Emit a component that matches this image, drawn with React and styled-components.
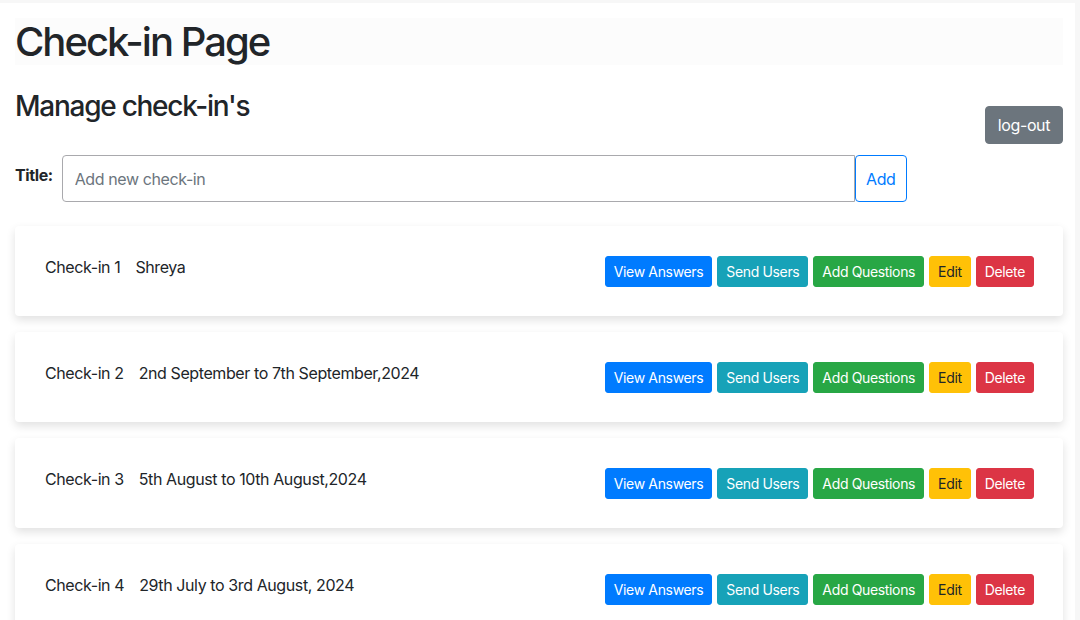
import React from 'react';
import styled, { createGlobalStyle } from 'styled-components';

const GlobalStyle = createGlobalStyle`
  html, body {
    margin: 0;
    padding: 0;
    background: #f7f7f7;
    font-family: Inter, "Noto Sans", "Liberation Sans", sans-serif;
    color: #212529;
    letter-spacing: -0.025em;
  }
  * { box-sizing: border-box; }
`;

const Page = styled.div`
  margin-top: 3px;
  margin-right: 5px;
  min-height: 617px;
  background: #fff;
  padding: 15px 12px 0 15px;
  overflow: hidden;
`;

const Banner = styled.div`
  background: #fcfcfc;
  height: 47px;
  display: flex;
  align-items: center;
`;

const PageTitle = styled.h1`
  margin: 0;
  font-size: 40px;
  font-weight: 500;
  line-height: 1.2;
  letter-spacing: -0.05em;
`;

const TopRow = styled.div`
  display: flex;
  justify-content: space-between;
  align-items: flex-start;
  margin-top: 25px;
`;

const SubTitle = styled.h3`
  margin: 0;
  font-size: 28px;
  font-weight: 500;
  line-height: 1.2;
  letter-spacing: -0.045em;
`;

const LogoutButton = styled.button`
  margin-top: 16px;
  background: #6c757d;
  color: #fff;
  border: 1px solid #6c757d;
  border-radius: 4px;
  font-family: inherit;
  font-size: 16px;
  letter-spacing: inherit;
  line-height: 24px;
  padding: 6px 12px;
`;

const FormRow = styled.div`
  display: flex;
  align-items: flex-start;
  margin-top: 11px;
`;

const Label = styled.label`
  font-weight: 700;
  font-size: 16px;
  line-height: 24px;
  margin-top: 8px;
  margin-right: 9px;
`;

const TitleInput = styled.input`
  width: 793px;
  height: 47px;
  border: 1px solid #a9a9ad;
  border-radius: 4px 0 0 4px;
  padding: 0 12px;
  font-family: inherit;
  font-size: 16px;
  letter-spacing: inherit;
  color: #495057;
  outline: none;
  &::placeholder { color: #6c757d; }
`;

const AddButton = styled.button`
  width: 52px;
  height: 47px;
  background: #fff;
  color: #007bff;
  border: 1px solid #007bff;
  border-radius: 4px;
  font-family: inherit;
  font-size: 16px;
  letter-spacing: inherit;
`;

const List = styled.div`
  display: flex;
  flex-direction: column;
  gap: 16px;
  margin-top: 24px;
`;

const Card = styled.div`
  height: 90px;
  background: #fff;
  border-radius: 4px;
  box-shadow: 0 4px 10px rgba(0, 0, 0, 0.12);
  display: flex;
  align-items: center;
  justify-content: space-between;
  padding: 0 29px 0 30px;
`;

const CardText = styled.div`
  font-size: 16px;
  line-height: 24px;
  margin-bottom: 8px;
  display: flex;
  gap: 15px;
`;

const Actions = styled.div`
  display: flex;
  gap: 5px;
`;

const colors = {
  primary: ['#007bff', '#fff'],
  info: ['#17a2b8', '#fff'],
  success: ['#28a745', '#fff'],
  warning: ['#ffc107', '#212529'],
  danger: ['#dc3545', '#fff'],
};

const SmallButton = styled.button`
  background: ${(p) => colors[p.$variant][0]};
  border: 1px solid ${(p) => colors[p.$variant][0]};
  color: ${(p) => colors[p.$variant][1]};
  border-radius: 3px;
  font-family: inherit;
  font-size: 14px;
  letter-spacing: -0.025em;
  line-height: 21px;
  padding: 4px 8px;
`;

const checkins = [
  { name: 'Check-in 1', detail: 'Shreya' },
  { name: 'Check-in 2', detail: '2nd September to 7th September,2024' },
  { name: 'Check-in 3', detail: '5th August to 10th August,2024' },
  { name: 'Check-in 4', detail: '29th July to 3rd August, 2024' },
];

const App = () => (
  <>
    <GlobalStyle />
    <Page>
      <Banner>
        <PageTitle>Check-in Page</PageTitle>
      </Banner>
      <TopRow>
        <SubTitle>Manage check-in's</SubTitle>
        <LogoutButton>log-out</LogoutButton>
      </TopRow>
      <FormRow>
        <Label>Title:</Label>
        <TitleInput placeholder="Add new check-in" />
        <AddButton>Add</AddButton>
      </FormRow>
      <List>
        {checkins.map((c) => (
          <Card key={c.name}>
            <CardText>
              <span>{c.name}</span>
              <span>{c.detail}</span>
            </CardText>
            <Actions>
              <SmallButton $variant="primary">View Answers</SmallButton>
              <SmallButton $variant="info">Send Users</SmallButton>
              <SmallButton $variant="success">Add Questions</SmallButton>
              <SmallButton $variant="warning">Edit</SmallButton>
              <SmallButton $variant="danger">Delete</SmallButton>
            </Actions>
          </Card>
        ))}
      </List>
    </Page>
  </>
);

export default App;
